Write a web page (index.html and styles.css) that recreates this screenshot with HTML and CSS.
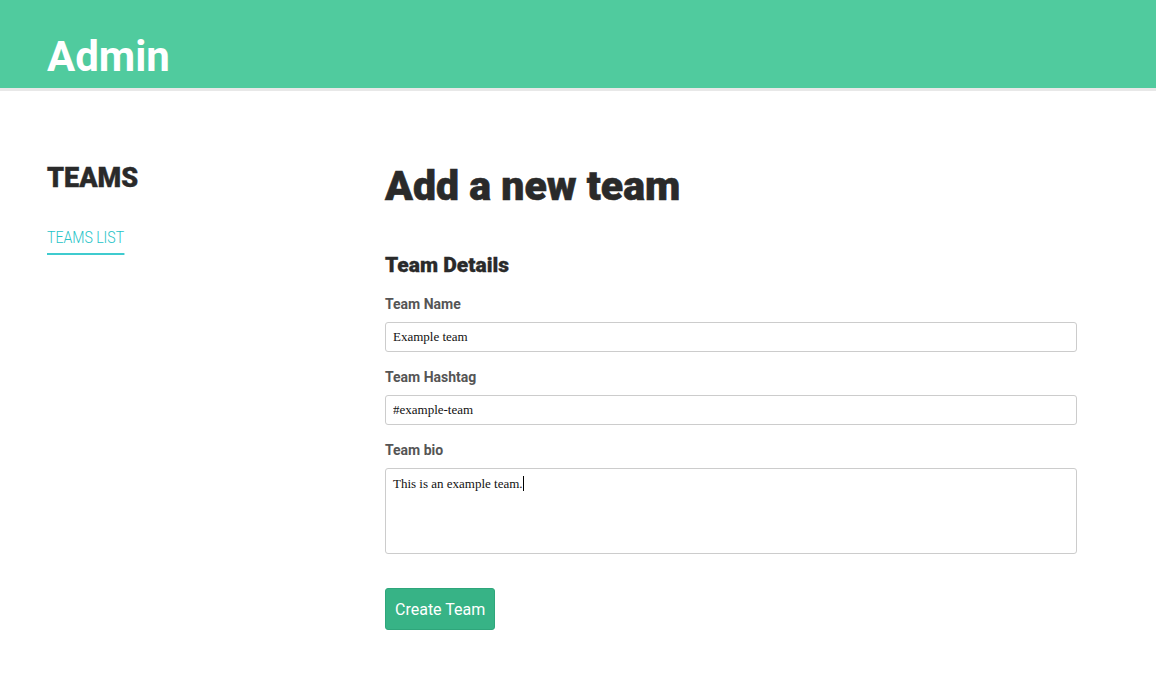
FILE: index.html
```html
<!DOCTYPE html>
<html lang="en">
<head>
<meta charset="utf-8">
<title>Admin</title>
<link rel="stylesheet" href="styles.css">
</head>
<body>
<header class="topbar">
  <h1 class="brand">Admin</h1>
</header>
<div class="layout">
  <aside class="sidebar">
    <h2 class="side-title">TEAMS</h2>
    <a class="side-link" href="#">TEAMS LIST</a>
  </aside>
  <main class="content">
    <h1 class="page-title">Add a new team</h1>
    <h3 class="section-title">Team Details</h3>
    <form class="form">
      <label class="label" for="name">Team Name</label>
      <input class="field" id="name" type="text" value="Example team">
      <label class="label" for="tag">Team Hashtag</label>
      <input class="field" id="tag" type="text" value="#example-team">
      <label class="label" for="bio">Team bio</label>
      <div class="field area" id="bio">This is an example team.<span class="caret"></span></div>
      <button class="btn" type="button">Create Team</button>
    </form>
  </main>
</div>
</body>
</html>
```
FILE: styles.css
```css
* { box-sizing: border-box; }
html, body { margin: 0; padding: 0; background: #fff; }
body { font-family: Roboto, "Liberation Sans", sans-serif; color: #2a2a2a; }

.topbar {
  background: #50cb9e;
  height: 91px;
  border-bottom: 3px solid #e8e8e8;
  padding: 0 47px;
  display: flex;
  align-items: flex-start;
}
.brand {
  margin: 0;
  padding-top: 33px;
  font-size: 42px;
  line-height: 48px;
  font-weight: 700;
  color: #fff;
}

.layout {
  display: flex;
  padding: 0 47px;
}
.sidebar {
  width: 338px;
  flex: none;
  padding-top: 72px;
  display: flex;
  flex-direction: column;
  align-items: flex-start;
}
.side-title {
  margin: 0;
  font-size: 27px;
  line-height: 30px;
  font-weight: 900;
  color: #2a2a2a;
  -webkit-text-stroke: 0.4px #2a2a2a;
}
.side-link {
  margin-top: 35px;
  display: inline-block;
  font-size: 16px;
  font-weight: 300;
  line-height: 20px;
  color: #25c3c7;
  text-decoration: none;
  border-bottom: 2px solid #3fcbcf;
  padding-bottom: 5px;
  transform: scaleX(0.88);
  transform-origin: left center;
}

.content {
  width: 692px;
  flex: none;
  padding-top: 71px;
}
.page-title {
  margin: 0;
  font-size: 41px;
  line-height: 48px;
  font-weight: 900;
  color: #2a2a2a;
  -webkit-text-stroke: 0.6px #2a2a2a;
}
.section-title {
  margin: 43px 0 0;
  font-size: 21px;
  line-height: 24px;
  font-weight: 900;
  color: #2a2a2a;
  -webkit-text-stroke: 0.3px #2a2a2a;
}
.form {
  display: flex;
  flex-direction: column;
  align-items: flex-start;
  margin-top: 18px;
}
.label {
  font-size: 14px;
  line-height: 18px;
  font-weight: 700;
  color: #555;
  margin-bottom: 9px;
}
.field {
  width: 100%;
  height: 30px;
  border: 1px solid #ccc;
  border-radius: 3px;
  padding: 0 7px;
  font-family: "Liberation Serif", serif;
  font-size: 13px;
  color: #111;
  margin-bottom: 16px;
  background: #fff;
  outline: none;
}
.area {
  height: 86px;
  padding: 7px 7px;
  line-height: 16px;
  margin-bottom: 34px;
}
.caret {
  display: inline-block;
  width: 1px;
  height: 15px;
  background: #000;
  vertical-align: -3px;
}
.btn {
  height: 42px;
  padding: 0 9px;
  background: #37b386;
  border: 1px solid #2fa67b;
  border-radius: 3px;
  color: #fff;
  font-family: Roboto, "Liberation Sans", sans-serif;
  font-size: 16px;
  font-weight: 400;
}
```
